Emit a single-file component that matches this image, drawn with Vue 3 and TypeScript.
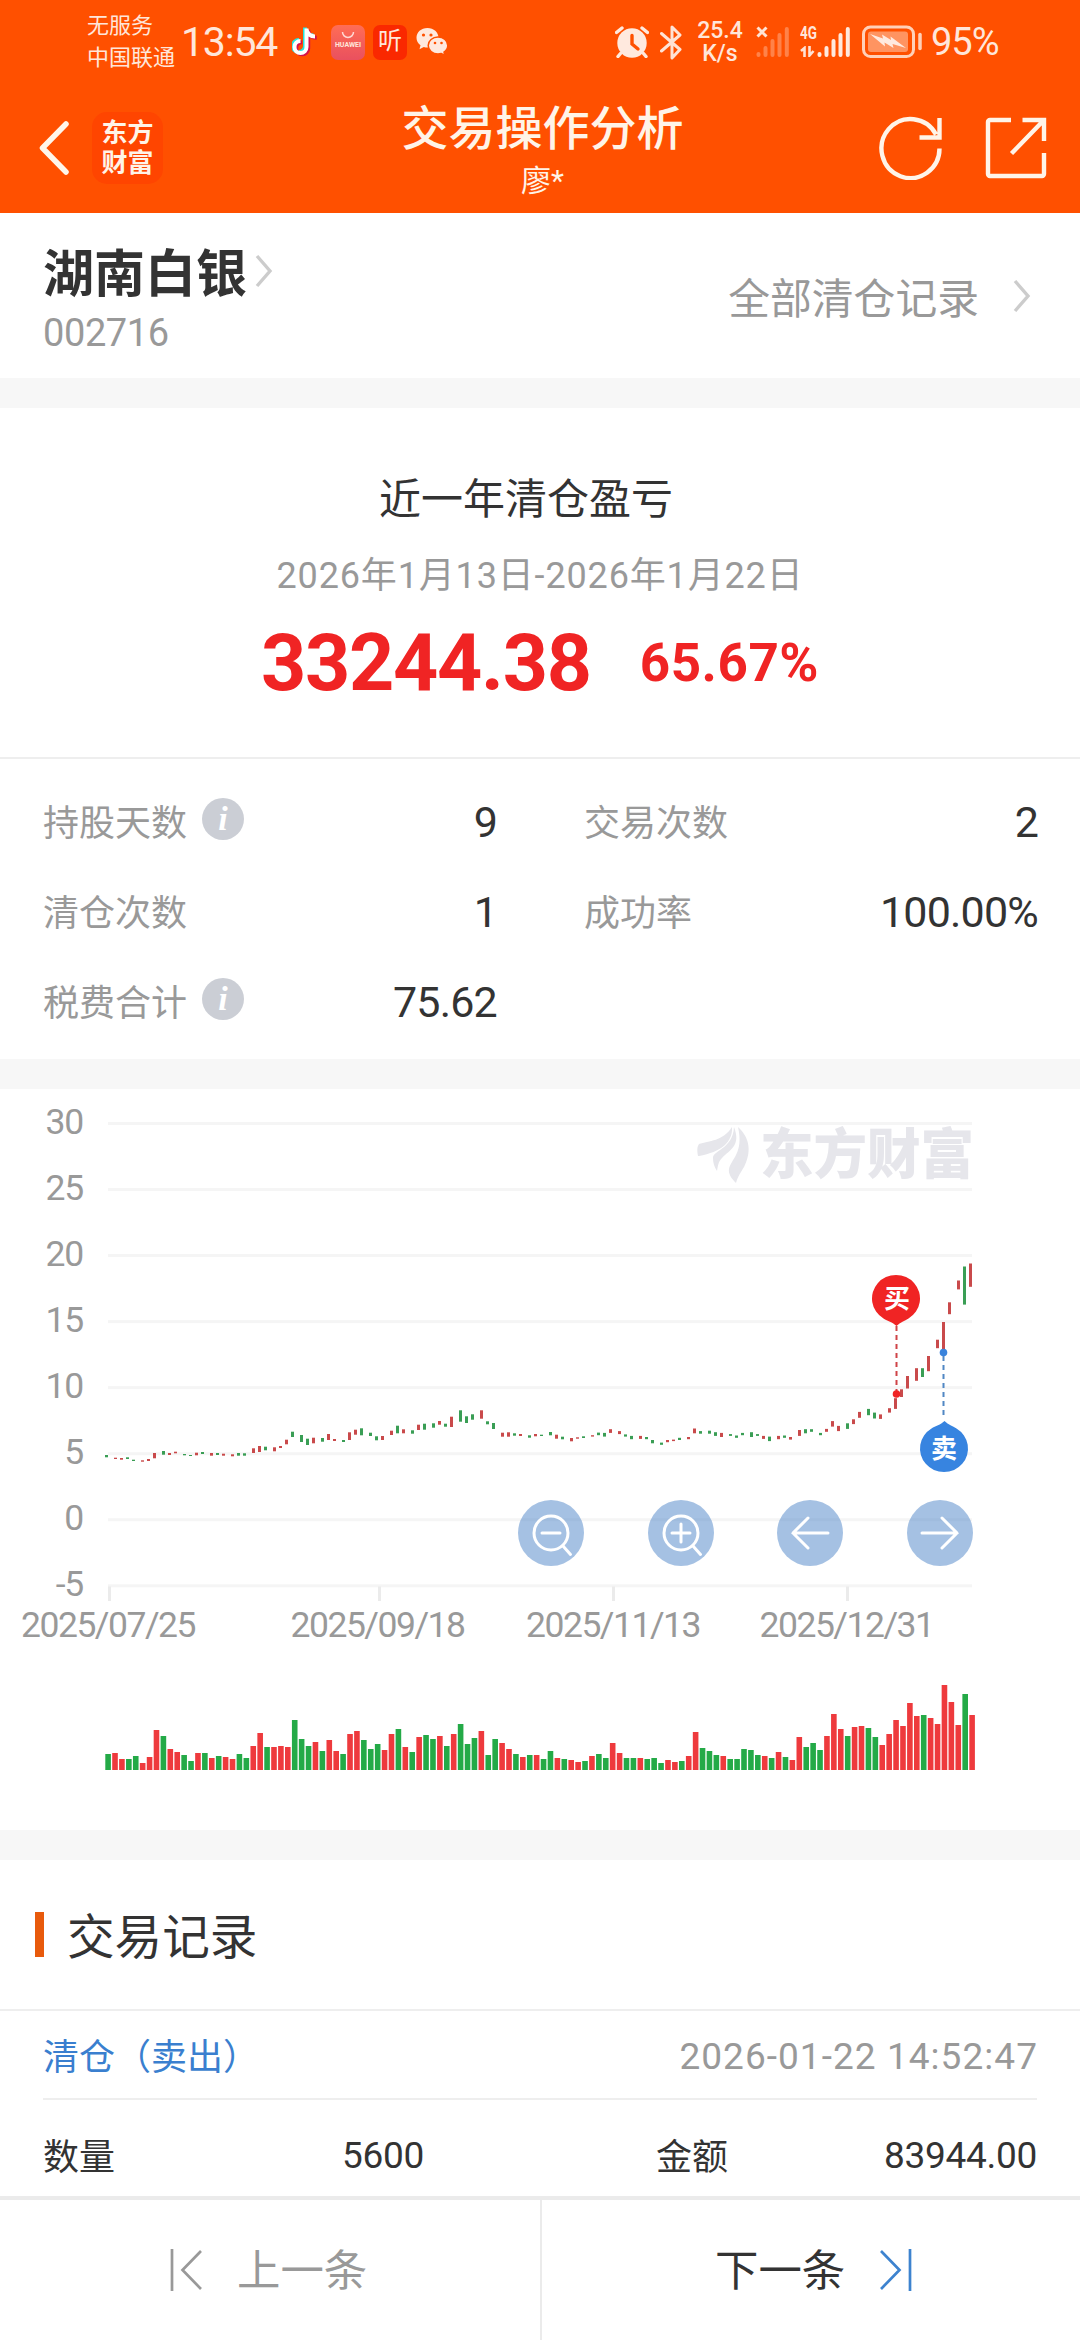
<script setup lang="ts">
interface Stat {
  label: string
  value: string
  info?: boolean
}

interface Day {
  x: number
  barX: number
  up: boolean
  top: number
  height: number
  volume: number
}

const stats: Stat[] = [
  { label: '持股天数', value: '9', info: true },
  { label: '交易次数', value: '2' },
  { label: '清仓次数', value: '1' },
  { label: '成功率', value: '100.00%' },
  { label: '税费合计', value: '75.62', info: true },
]

// One entry per trading day: direction (r = up, g = down), body top, body bottom, volume height
const series = `
g 366 368.3 16|r 368.7 370 17|r 369 370.7 11|g 368.3 370 11|g 370.7 372 14|r 371.3 372.7 7|r 370 372 13|r 364 369.3 40
g 362 365.7 34|r 364 366 21|r 362.7 364.3 18|g 365 366.3 15|g 366 367 9|r 363.7 366.3 17|g 363 365 17|r 364 366.7 12
g 364 366 14|r 364.7 366.7 13|r 365.3 367.3 11|g 364 366.7 16|g 364.3 366.7 12|r 359.3 364 24|r 357 363 37|g 357.7 361.3 23
r 358.3 362.3 23|r 357 359 24|r 350.7 355.3 23|g 342.7 348 50|g 346 353 31|g 349.7 356 24|r 348.7 354.3 28|g 349 352.7 19
r 345 351 30|r 350 352 19|g 351 353 16|r 343.3 351 36|r 340.7 345.7 39|g 339.3 346.3 30|g 343.7 347 21|g 347.3 351.3 26
r 347 351 20|r 341.7 346 36|g 336.7 344.3 41|r 340.3 344.3 23|g 341.3 344.7 18|r 335.7 341 33|g 334.7 340.7 35|g 334.3 338.7 31
r 332 335.7 34|g 334.7 337.7 24|r 327.7 338 36|g 321.3 332.7 46|g 327.3 334 26|g 325.3 330.7 32|r 321.3 329.7 39|g 332.3 335.3 15
g 334 340 31|r 343.7 347.7 27|r 343.3 347.7 21|g 344.3 346.7 16|r 345 347 13|g 346.3 348.7 15|r 345 347.3 15|g 345.7 347 11
g 343 346.3 19|r 345.7 349.7 12|g 347.7 350.3 11|r 349 352.3 10|r 348.3 349.7 8|g 347.3 349 9|r 346.2 347.6 14|g 343.6 346.2 16
g 343.9 347.6 12|r 340.2 343.9 27|r 342.1 345.1 17|g 345.4 347.6 12|g 346.9 350.2 12|r 346.9 349.9 12|g 348 350.2 11|g 351 354.3 12
g 353.6 355.8 7|r 351 353.2 10|r 350.6 352.1 8|g 348.8 351 9|r 348 350.2 14|r 339.5 344.3 38|g 342.1 344.7 22|g 341.7 344.7 19
g 343.2 346.9 15|r 343.9 348 14|g 345.1 346.9 11|g 346.5 348.8 11|g 343.9 346.2 21|g 343.2 348 20|g 345.1 346.9 15|r 346.9 349.9 14
g 347.6 352.1 12|r 346.9 350.2 18|g 346.5 348.8 13|r 348 350.6 10|r 341 346.9 33|g 340.2 344.3 23|g 340.2 342.8 27|g 343.9 346.2 20
r 339.9 342.8 34|r 332.1 337.6 56|r 336.9 342.1 41|g 334.3 339.9 34|r 330.3 335.1 43|r 322.9 328.8 44|g 319.9 326.2 42|g 323.6 329.5 33
r 325.4 329.9 25|r 319.2 323.6 36|r 309.2 319.9 50|r 300.3 308 44|r 287 299.5 67|r 279.2 291.8 54|g 279.2 288 55|r 267 282.2 52
r 250.7 259.2 46|r 233 260.3 85|r 213.3 225.2 68|r 191.5 200.4 45|g 177.5 215.6 76|r 174.5 197.8 55`

const step = 864 / 125
const days: Day[] = series
  .trim()
  .split(/[|\n]/)
  .map((entry, i) => {
    const [dir, top, bottom, volume] = entry.split(' ')
    return {
      // candles snap to a three-pixel grid
      x: 105 + 3 * Math.floor((i * step) / 3 + 0.73),
      barX: 105.3 + i * step,
      up: dir === 'r',
      top: Number(top),
      height: Number(bottom) - Number(top),
      volume: Number(volume),
    }
  })

const yAxis = [30, 25, 20, 15, 10, 5, 0, -5].map((value, i) => ({ value, y: 34.2 + i * 66.04 }))
const xAxis = [
  { label: '2025/07/25', tick: 109.5, x: 108 },
  { label: '2025/09/18', tick: 379.5, x: 377.5 },
  { label: '2025/11/13', tick: 613.5, x: 613 },
  { label: '2025/12/31', tick: 847.5, x: 846.5 },
]
</script>

<template>
  <div class="page">
    <header class="header">
      <div class="status">
        <div class="carrier"><span>无服务</span><span>中国联通</span></div>
        <span class="clock">13:54</span>
        <svg class="tiktok" width="26" height="30" viewBox="0 0 26 30">
          <g fill="none" stroke-width="4">
            <path d="M14 1v18.500a6 6 0 1 1-6-6M14 2c1 4.500 4 7 8.500 7" stroke="#25e6df" transform="translate(-1 -.5)" />
            <path d="M15 2v18.500a6 6 0 1 1-6-6M15 3c1 4.500 4 7 8.500 7" stroke="#d6124a" transform="translate(1.200 .8)" />
            <path d="M14.500 1.500v18.500a6 6 0 1 1-6-6M14.500 2.500c1 4.500 4 7 8.500 7" stroke="#fff" />
          </g>
        </svg>
        <div class="app huawei">
          <svg width="14" height="8" viewBox="0 0 14 8"><path d="M1.500 1a5.500 5.500 0 0 0 11 0" fill="none" stroke="#ffd9d3" stroke-width="1.500" /></svg>
          <span>HUAWEI</span>
        </div>
        <div class="app listen">听</div>
        <svg class="wechat" width="33" height="28" viewBox="0 0 33 28">
          <path d="M11.500 0C5 0 .5 4.400.5 9.800c0 3 1.500 5.700 4 7.500l-1 4 4.300-2.200c1.200.4 2.400.5 3.700.5 6.200 0 11-4.300 11-9.800S17.700 0 11.500 0z" fill="#ffe9de" />
          <path d="M22 9c-5.500 0-9.800 3.700-9.800 8.500S16.500 26 22 26c1.200 0 2.300-.2 3.300-.5l3.600 2-.9-3.400c2.400-1.600 3.800-3.900 3.800-6.600C31.800 12.700 27.500 9 22 9z" fill="#ffe9de" stroke="#ff5000" stroke-width="1.500" />
          <g fill="#ff5000"><circle cx="7.500" cy="7" r="1.600" /><circle cx="15" cy="7" r="1.600" /><circle cx="19" cy="15" r="1.300" /><circle cx="25.500" cy="15" r="1.300" /></g>
        </svg>
        <svg class="alarm" width="34" height="32" viewBox="0 0 34 32">
          <circle cx="17" cy="17" r="14.700" fill="#ffe9de" />
          <path d="M1.500 6.500 7 2M32.500 6.500 27 2M5.500 27.500l-2.500 3M28.500 27.500l2.500 3" stroke="#ffe9de" stroke-width="3.400" stroke-linecap="round" />
          <path d="M17 9.500V18l6 5" fill="none" stroke="#ff5000" stroke-width="3.400" stroke-linecap="round" />
        </svg>
        <svg class="bluetooth" width="22" height="35" viewBox="0 0 22 35">
          <path d="M1.500 8.500 20 24.500l-8 8.500V2l8 8L1.500 26" fill="none" stroke="#ffe3d5" stroke-width="3" stroke-linejoin="round" stroke-linecap="round" />
        </svg>
        <div class="speed"><span>25.4</span><span>K/s</span></div>
        <svg class="signal" width="34" height="32" viewBox="0 0 34 32">
          <path d="M1.500 1.500l9 9M10.500 1.500l-9 9" stroke="#ffe3d5" stroke-width="3" />
          <path d="M2.500 28v1M9.500 22v7M16.500 15v14M23.500 9v20M30.800 3v26" stroke="#ff8249" stroke-width="4" stroke-linecap="round" />
        </svg>
        <div class="cellular">
          <div class="network">
            <span>4G</span>
            <svg width="15" height="11" viewBox="0 0 15 11"><path d="M4.500 11V2L1 5M9.500 0v9.500l4-4.500" fill="none" stroke="#ffe3d5" stroke-width="2.600" /></svg>
          </div>
          <svg width="34" height="32" viewBox="0 0 34 32">
            <path d="M2.500 28v1M9.500 22v7M16.500 15v14M23.500 9v20M30.800 3v26" stroke="#ffe9de" stroke-width="4" stroke-linecap="round" />
          </svg>
        </div>
        <svg class="battery" width="60" height="34" viewBox="0 0 60 34">
          <rect x="1.500" y="2" width="50" height="29.500" rx="7" fill="none" stroke="#ffd0b8" stroke-width="3" />
          <rect x="6" y="6.500" width="40" height="20.500" rx="3" fill="#ff9461" />
          <path d="M8 9l13 4.500-1-4 9 5.500-.5-3.500L44 23l-13.500-4 1 4-9-5.500.5 4z" fill="#ffeadf" />
          <path d="M58 9.500v14" stroke="#ffd0b8" stroke-width="3.500" stroke-linecap="round" />
        </svg>
        <span class="percent">95%</span>
      </div>
      <nav class="nav">
        <div class="nav-side">
          <svg width="32" height="56" viewBox="0 0 32 56"><path d="M28 4 4.500 28 28 52" fill="none" stroke="#fff6ea" stroke-width="5.500" stroke-linecap="round" stroke-linejoin="round" /></svg>
          <div class="logo"><span>东方</span><span>财富</span></div>
        </div>
        <div class="title"><h1>交易操作分析</h1><p>廖*</p></div>
        <div class="nav-side actions">
          <svg width="64" height="64" viewBox="0 0 64 64"><path d="M60.500 32.500A29 29.500 0 1 1 57 18.500M60.500 2v19.500H40.500" fill="none" stroke="#fff4e8" stroke-width="4.400" /></svg>
          <svg width="62" height="62" viewBox="0 0 62 62"><path d="M26 3H5a2 2 0 0 0-2 2v52a2 2 0 0 0 2 2h52a2 2 0 0 0 2-2V36M37.500 3H59V24M59 3 26.500 36.500" fill="none" stroke="#fff4e8" stroke-width="4.400" /></svg>
        </div>
      </nav>
    </header>

    <section class="stock">
      <div>
        <div class="stock-name">
          <h2>湖南白银</h2>
          <svg width="18" height="36" viewBox="0 0 18 36"><path d="M2 3l13 15L2 33" fill="none" stroke="#ccc" stroke-width="3.400" /></svg>
        </div>
        <p class="stock-code">002716</p>
      </div>
      <div class="all-records">
        <span>全部清仓记录</span>
        <svg width="18" height="36" viewBox="0 0 18 36"><path d="M2 3l13 15L2 33" fill="none" stroke="#ccc" stroke-width="3.400" /></svg>
      </div>
    </section>

    <section class="summary">
      <h3>近一年清仓盈亏</h3>
      <p class="period">2026年1月13日-2026年1月22日</p>
      <div class="profit"><strong>33244.38</strong><b>65.67%</b></div>
    </section>

    <section class="stats">
      <div v-for="stat in stats" :key="stat.label" class="stat">
        <span class="stat-label">{{ stat.label }}</span>
        <i v-if="stat.info" class="info">i</i>
        <span class="stat-value">{{ stat.value }}</span>
      </div>
    </section>

    <section class="chart">
      <svg width="1080" height="740" viewBox="0 0 1080 740">
        <g v-for="line in yAxis" :key="line.value">
          <rect x="108" :y="line.y - 1.200" width="864" height="3" fill="#f5f5f5" />
          <text class="axis" x="83" :y="line.y + 10.500" text-anchor="end">{{ line.value }}</text>
        </g>
        <g v-for="tick in xAxis" :key="tick.label">
          <rect :x="tick.tick - 1.500" y="497.500" width="3" height="14.500" fill="#ebebeb" />
          <text class="axis date" :x="tick.x" y="548" text-anchor="middle">{{ tick.label }}</text>
        </g>
        <g fill="#e6e6eb">
          <path d="M698 67c-1-6-1-9 1-12 10-3 24-3 33-17 1 15-11 25-33 29z" />
          <path d="M734 38c7 18-3 22-12 31-4 4-4 8-5 13-3-4-4-9-4-13 0-8 20-9 21-31z" />
          <path d="M738 38c13 12 13 26 6 40-3 5-6 9-8 16-4-4-8-9-7-14 2-10 15-16 9-42z" />
          <text class="watermark" x="760" y="85" textLength="214" lengthAdjust="spacingAndGlyphs">东方财富</text>
        </g>
        <rect v-for="(day, i) in days" :key="'c' + i" :x="day.x" :y="day.top" width="3" :height="day.height" :fill="day.up ? '#c94a4b' : '#3a9e55'" />
        <rect v-for="(day, i) in days" :key="'v' + i" :x="day.barX" :y="681 - day.volume" width="5.600" :height="day.volume" :fill="day.up ? '#ee3a3d' : '#24aa47'" />
        <path d="M896.500 237v66" stroke="#cf4347" stroke-width="2" stroke-dasharray="5 4" />
        <circle cx="896.500" cy="305" r="3.800" fill="#f02424" />
        <path d="M896.500 237c-4-4-9-5-13-7.500A24 23.500 0 1 1 908.500 229.500c-4 2.500-8 3.500-12 7.500z" fill="#f02424" />
        <text class="pin" x="897" y="219" text-anchor="middle">买</text>
        <path d="M943.500 267v62" stroke="#5187c4" stroke-width="2" stroke-dasharray="5 4" />
        <circle cx="943.500" cy="263.500" r="3.800" fill="#3a83dc" />
        <path d="M944.500 332c4 4 8 5 12 7.500A24 23.500 0 1 1 931.500 339.500c4-2.500 9-3.500 13-7.500z" fill="#3784e0" />
        <text class="pin" x="944" y="369" text-anchor="middle">卖</text>
      </svg>
      <div class="tools">
        <span class="tool"><svg viewBox="-33 -33 66 66"><circle r="17" /><path d="M-9 0H9M12 13l7.500 8.500" /></svg></span>
        <span class="tool"><svg viewBox="-33 -33 66 66"><circle r="17" /><path d="M-9 0H9M0-9V9M12 13l7.500 8.500" /></svg></span>
        <span class="tool"><svg viewBox="-33 -33 66 66"><path d="M18 0h-35M-2-15-17 0-2 15" /></svg></span>
        <span class="tool"><svg viewBox="-33 -33 66 66"><path d="M-18 0h35M2-15 17 0 2 15" /></svg></span>
      </div>
    </section>

    <section class="records">
      <h3 class="records-title"><span>交易记录</span></h3>
      <div class="record">
        <div class="record-head"><span class="kind">清仓（卖出）</span><time>2026-01-22 14:52:47</time></div>
        <div class="record-body">
          <div class="cell quantity"><span class="field">数量</span><span class="num">5600</span></div>
          <div class="cell amount"><span class="field">金额</span><span class="num">83944.00</span></div>
        </div>
      </div>
    </section>

    <footer class="pager">
      <div class="prev">
        <svg width="33" height="44" viewBox="0 0 33 44"><path d="M2 1v42M31 3 12.500 22 31 41" fill="none" stroke="#999" stroke-width="2.700" /></svg>
        <span>上一条</span>
      </div>
      <div class="next">
        <span>下一条</span>
        <svg width="33" height="44" viewBox="0 0 33 44"><path d="M31 1v42M2 3l18.500 19L2 41" fill="none" stroke="#3d83cf" stroke-width="2.700" /></svg>
      </div>
    </footer>
  </div>
</template>

<style>
body {
  margin: 0;
  background: #fff;
}
</style>

<style scoped>
.page {
  box-sizing: border-box;
  display: flex;
  flex-direction: column;
  width: 1080px;
  height: 2340px;
  overflow: hidden;
  background: #fff;
  color: #333;
  font-family: Roboto, "Noto Sans CJK SC", sans-serif;
}
svg {
  display: block;
  flex: none;
}
h1, h2, h3, p {
  margin: 0;
  font-weight: 400;
}

.header {
  flex: none;
  height: 213px;
  background: #ff5000;
  color: #fff4e8;
}
.status {
  display: flex;
  align-items: center;
  height: 84px;
  padding-left: 87px;
  color: #ffe6da;
  white-space: nowrap;
}
.carrier {
  display: flex;
  flex-direction: column;
  width: 94px;
  font-size: 22px;
  line-height: 32px;
}
.clock {
  width: 111px;
  font-size: 41px;
  letter-spacing: -1.2px;
}
.tiktok { margin-right: 13px; }
.app {
  display: flex;
  flex-direction: column;
  align-items: center;
  box-sizing: border-box;
  width: 34px;
  height: 35px;
  margin-right: 8px;
  border-radius: 7px;
}
.huawei {
  padding-top: 6px;
  background: linear-gradient(#ff6d55, #e9505f);
}
.huawei span {
  margin-top: 2px;
  font-size: 7px;
  font-weight: 700;
  line-height: 8px;
}
.listen {
  background: #fa2800;
  font-size: 24px;
  line-height: 33px;
}
.wechat { margin: 0 166px 0 1px; }
.alarm { margin-right: 11px; }
.bluetooth { margin-right: 15px; }
.speed {
  display: flex;
  flex-direction: column;
  align-items: center;
  width: 46px;
  margin-right: 13px;
  font-size: 23px;
  font-weight: 500;
  line-height: 23px;
}
.signal { margin-right: 10px; }
.cellular {
  display: flex;
  margin-right: 11px;
}
.network {
  display: flex;
  flex-direction: column;
  justify-content: space-between;
  width: 17px;
  height: 31px;
  font-size: 18px;
  font-weight: 700;
  line-height: 14px;
}
.network span {
  transform: scaleX(0.75);
  transform-origin: left;
}
.battery { margin-right: 9px; }
.percent {
  font-size: 38px;
  letter-spacing: -1px;
}
.nav {
  display: flex;
  justify-content: space-between;
  height: 129px;
}
.nav-side {
  display: flex;
  align-items: center;
  width: 300px;
  height: 128px;
  padding-left: 38px;
}
.logo {
  display: flex;
  flex-direction: column;
  align-items: center;
  justify-content: center;
  width: 71px;
  height: 72px;
  margin-left: 22px;
  border-radius: 15px;
  background: #ff4500;
  font-size: 26px;
  font-weight: 700;
  line-height: 30px;
}
.title {
  display: flex;
  flex-direction: column;
  align-items: center;
  padding-top: 12px;
}
.title h1 {
  font-size: 47px;
  font-weight: 500;
  line-height: 66px;
}
.title p {
  padding-top: 1px;
  font-size: 30px;
  line-height: 36px;
}
.actions {
  justify-content: flex-end;
  gap: 42px;
  padding: 0 33px 0 0;
}

.stock {
  display: flex;
  flex: none;
  justify-content: space-between;
  box-sizing: border-box;
  height: 165px;
  padding: 27px 49px 0 43px;
}
.stock-name {
  display: flex;
  align-items: center;
}
.stock-name h2 {
  font-size: 51px;
  font-weight: 700;
  line-height: 70px;
}
.stock-name svg { margin: -8px 0 0 8px; }
.stock-code {
  padding-top: 1px;
  color: #999;
  font-size: 38px;
  line-height: 44px;
  letter-spacing: -0.4px;
}
.all-records {
  display: flex;
  align-items: center;
  height: 112px;
  color: #999;
  font-size: 41.800px;
}
.all-records svg { margin-left: 34px; }

.summary {
  display: flex;
  flex: none;
  flex-direction: column;
  align-items: center;
  box-sizing: border-box;
  height: 381px;
  padding-top: 62px;
  border-top: 30px solid #f7f7f7;
  border-bottom: 2px solid #eee;
}
.summary h3 {
  padding-right: 28px;
  font-size: 42px;
  line-height: 60px;
}
.period {
  padding-top: 24px;
  color: #999;
  font-size: 36px;
  line-height: 44px;
  letter-spacing: 0.85px;
}
.profit {
  display: flex;
  align-items: center;
  padding-top: 20px;
  color: #f02424;
  line-height: 90px;
}
.profit strong {
  font-size: 79px;
  font-weight: 700;
  letter-spacing: -1.300px;
}
.profit b {
  padding-left: 49px;
  font-size: 53px;
  letter-spacing: 0.5px;
}

.stats {
  display: grid;
  flex: none;
  grid-template-columns: 453px 453px;
  grid-auto-rows: 90px;
  column-gap: 88px;
  box-sizing: border-box;
  height: 300px;
  padding: 17px 43px 0;
}
.stat {
  display: flex;
  align-items: center;
}
.stat-label {
  margin-top: -3px;
  color: #999;
  font-size: 36px;
}
.info {
  width: 42px;
  height: 42px;
  margin: -4px 0 0 15px;
  border-radius: 50%;
  background: #cbced5;
  color: #fff;
  font: italic 700 34px/41px "Liberation Serif", serif;
  text-align: center;
}
.stat-value {
  margin: 1px -1px 0 auto;
  font-size: 43px;
  letter-spacing: -0.8px;
}

.chart {
  position: relative;
  flex: none;
  height: 741px;
  border-top: 30px solid #f7f7f7;
}
.axis {
  fill: #999;
  font-size: 35.500px;
  letter-spacing: -1.200px;
}
.date { letter-spacing: -1.500px; }
.watermark {
  font-size: 54px;
  font-weight: 900;
}
.pin {
  fill: #fff;
  font-size: 26px;
  font-weight: 700;
}
.tools {
  position: absolute;
  top: 411px;
  left: 518px;
  display: flex;
  gap: 63.500px;
}
.tool {
  width: 66px;
  height: 66px;
  border-radius: 50%;
  background: rgba(75, 131, 199, 0.5);
}
.tool svg {
  fill: none;
  stroke: #fff;
  stroke-width: 3;
  stroke-linecap: round;
}

.records {
  flex: none;
  box-sizing: border-box;
  height: 366px;
  border-top: 30px solid #f7f7f7;
}
.records-title {
  display: flex;
  align-items: center;
  box-sizing: border-box;
  height: 151px;
  padding-left: 35px;
  border-bottom: 2px solid #eee;
  font-size: 47.600px;
}
.records-title span { margin-top: -3px; }
.records-title::before {
  content: "";
  width: 9px;
  height: 45px;
  margin-right: 23px;
  background: #e85a0c;
}
.record { padding: 0 43px; }
.record-head,
.record-body {
  display: flex;
  align-items: center;
  justify-content: space-between;
}
.record-head {
  box-sizing: border-box;
  height: 89px;
  padding-top: 4px;
  border-bottom: 2px solid #eee;
  font-size: 36px;
}
.kind {
  margin-top: -6px;
  color: #3a7fcf;
}
time {
  margin-right: -1px;
  color: #999;
  font-size: 37px;
  letter-spacing: 1.050px;
}
.record-body {
  height: 112px;
  font-size: 36px;
}
.cell {
  display: flex;
  align-items: center;
  justify-content: space-between;
  width: 381px;
}
.field { margin-top: -5px; }
.num {
  margin-top: -2px;
  font-size: 37px;
  letter-spacing: -0.3px;
}

.pager {
  display: flex;
  flex: 1;
  border-top: 4px solid #ebebeb;
}
.prev,
.next {
  display: flex;
  align-items: flex-start;
  box-sizing: border-box;
  padding-top: 38px;
  font-size: 43.400px;
  line-height: 67px;
}
.prev {
  width: 542px;
  padding-left: 170px;
  border-right: 2px solid #ebebeb;
  color: #999;
}
.next {
  flex: 1;
  padding-left: 173px;
}
.prev svg { margin: 10px 34px 0 0; }
.next svg { margin: 10px 0 0 34px; }
</style>
